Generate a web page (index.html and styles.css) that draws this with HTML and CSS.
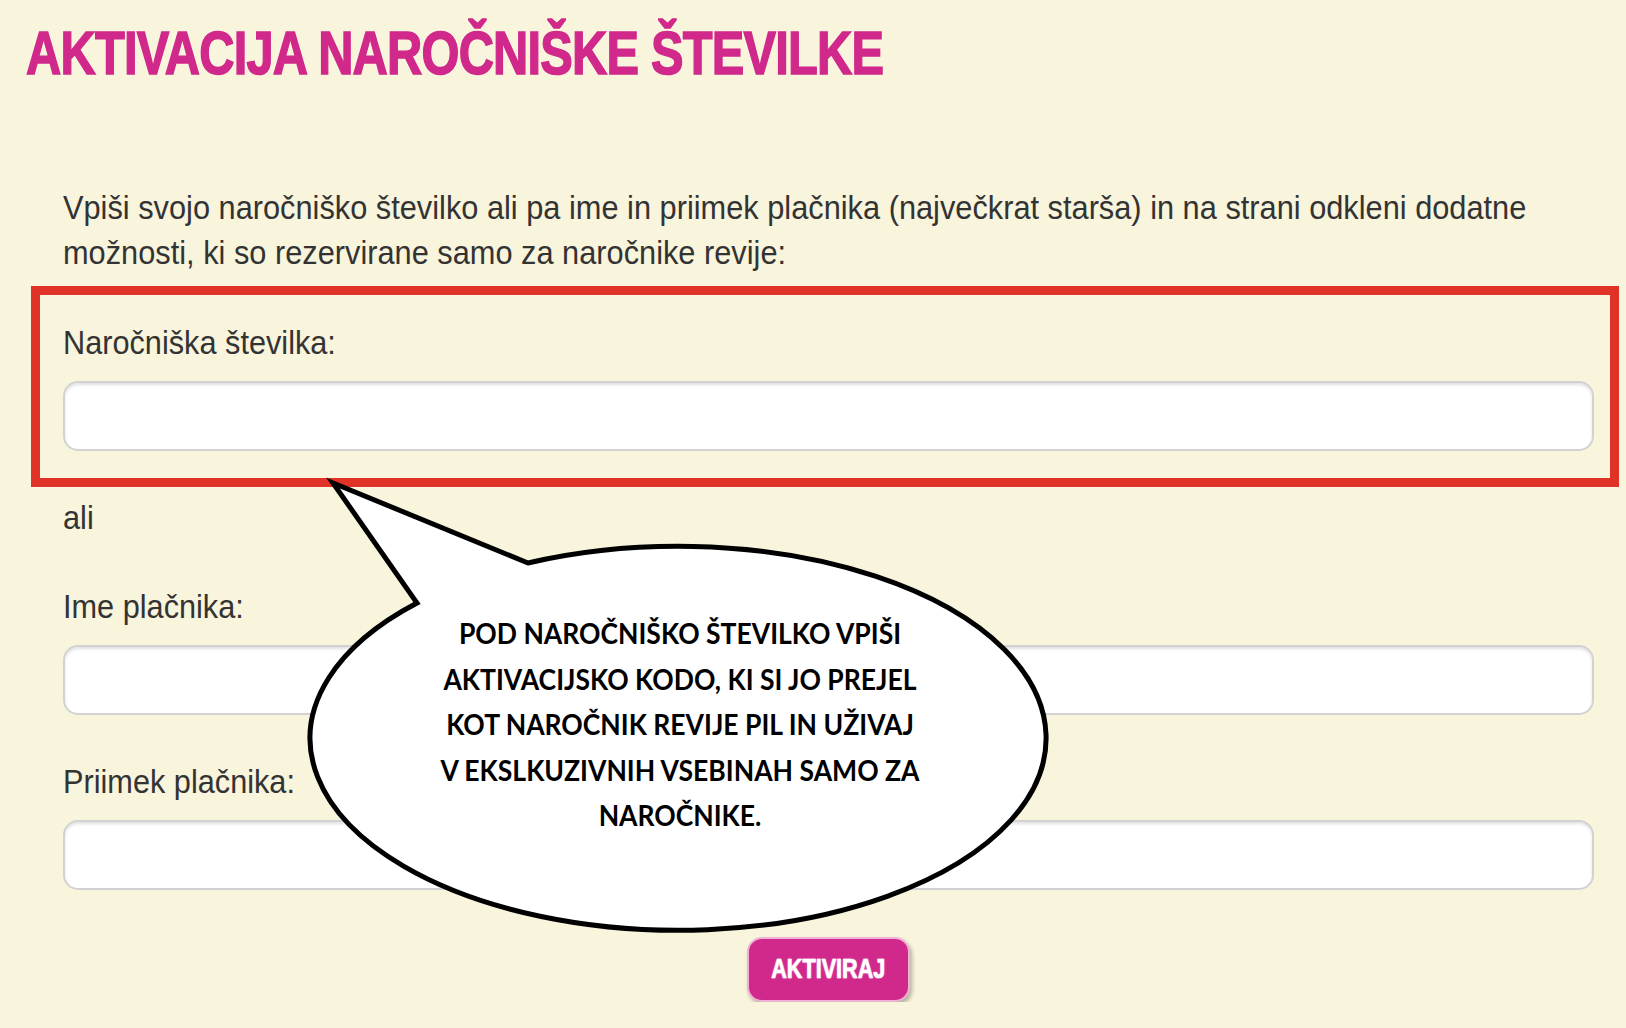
FILE: index.html
```html
<!DOCTYPE html>
<html lang="sl">
  <head>
    <meta charset="UTF-8" />
    <meta name="viewport" content="width=device-width, initial-scale=1.0" />
    <title>Aktivacija naročniške številke</title>
    <link rel="stylesheet" href="styles.css">
  </head>
  <body>
    <main class="page">
      <h1 class="title">AKTIVACIJA NAROČNIŠKE ŠTEVILKE</h1>
      <p class="intro">
        Vpiši svojo naročniško številko ali pa ime in priimek plačnika (največkrat starša) in na strani odkleni dodatne
        možnosti, ki so rezervirane samo za naročnike revije:
      </p>
      <form class="activate-form" action="">
        <div class="field field-marked">
          <label for="number">Naročniška številka:</label>
          <input type="text" id="number" name="number" />
        </div>
        <p class="or">ali</p>
        <div class="field">
          <label for="firstname">Ime plačnika:</label>
          <input type="text" id="firstname" name="firstname" />
        </div>
        <div class="field">
          <label for="lastname">Priimek plačnika:</label>
          <input type="text" id="lastname" name="lastname" />
        </div>
        <div class="actions">
          <button type="submit"><span>AKTIVIRAJ</span></button>
        </div>
      </form>
    </main>

    <!-- speech bubble pointing at the subscriber number field -->
    <div class="bubble">
      <svg class="bubble-shape" width="760" height="470" viewBox="300 470 760 470">
        <path d="M 528 563 L 333 483 L 417 603 A 368 192 0 1 0 528 563 Z" fill="#fff" stroke="#000" stroke-width="5" stroke-linejoin="miter" />
      </svg>
      <div class="bubble-text">
        POD NAROČNIŠKO ŠTEVILKO VPIŠI<br />
        AKTIVACIJSKO KODO, KI SI JO PREJEL<br />
        KOT NAROČNIK REVIJE PIL IN UŽIVAJ<br />
        V EKSLKUZIVNIH VSEBINAH SAMO ZA<br />
        NAROČNIKE.
      </div>
    </div>
  </body>
</html>
```

FILE: styles.css
```css
* {
  box-sizing: border-box;
}
html,
body {
  overflow: hidden;
}
body {
  margin: 0;
  background-color: #f9f4dc;
  font-family: "Liberation Sans", Arial, sans-serif;
  color: #333;
}
.page {
  padding: 23px 32px 0 63px;
}
/* the page text is set in a narrow cut: squeeze Arial-width text */
.title,
.intro,
label,
.or {
  transform-origin: 0 0;
}
.title {
  margin: 0 0 0 -37px;
  font-size: 61px;
  line-height: 61px;
  font-weight: bold;
  letter-spacing: -1px;
  white-space: nowrap;
  color: #d0288b;
  -webkit-text-stroke: 1.5px #d0288b;
  transform: scaleX(0.8);
}
.intro {
  width: 107.3%;
  margin: 101px 0 0;
  font-size: 33px;
  line-height: 45px;
  transform: scaleX(0.932);
}
.field {
  margin-top: 44px;
}
.field-marked {
  margin: 11px -25px 0 -32px;
  border: 9px solid #e03226;
  padding: 25px 16px 27px 23px;
}
label {
  display: block;
  font-size: 33px;
  line-height: 45px;
  transform: scaleX(0.93);
}
input {
  display: block;
  width: 100%;
  height: 70px;
  margin-top: 16px;
  padding: 0 16px;
  border: 2px solid #d2d2d2;
  border-radius: 15px;
  background-color: #fff;
  box-shadow: inset 0 2px 3px rgba(0, 0, 0, 0.12);
  outline: none;
  font-size: 28px;
}
.or {
  margin: 8px 0 0;
  font-size: 33px;
  line-height: 45px;
  transform: scaleX(0.93);
}
.actions {
  margin-top: 47px;
  text-align: center;
}
button {
  width: 163px;
  height: 65px;
  padding: 0;
  border: 2px solid #eeb2d6;
  border-radius: 15px;
  background-color: #d0288b;
  box-shadow: 2px 3px 4px rgba(0, 0, 0, 0.28);
  color: #fff;
  font-family: "Liberation Sans", Arial, sans-serif;
  font-size: 27px;
  font-weight: bold;
  text-shadow: 0 0 2px #f7b9de;
  -webkit-text-stroke: 0.6px #fff;
  cursor: pointer;
}
button span {
  display: inline-block;
  transform: scaleX(0.8);
}
.bubble {
  position: absolute;
  left: 300px;
  top: 470px;
  width: 760px;
  height: 470px;
}
.bubble-shape {
  display: block;
}
.bubble-text {
  position: absolute;
  left: 0;
  top: 140px;
  width: 760px;
  text-align: center;
  font-family: Lato, sans-serif;
  font-weight: bold;
  font-size: 29px;
  line-height: 45.5px;
  color: #000;
  transform: scaleX(0.915);
}
```
